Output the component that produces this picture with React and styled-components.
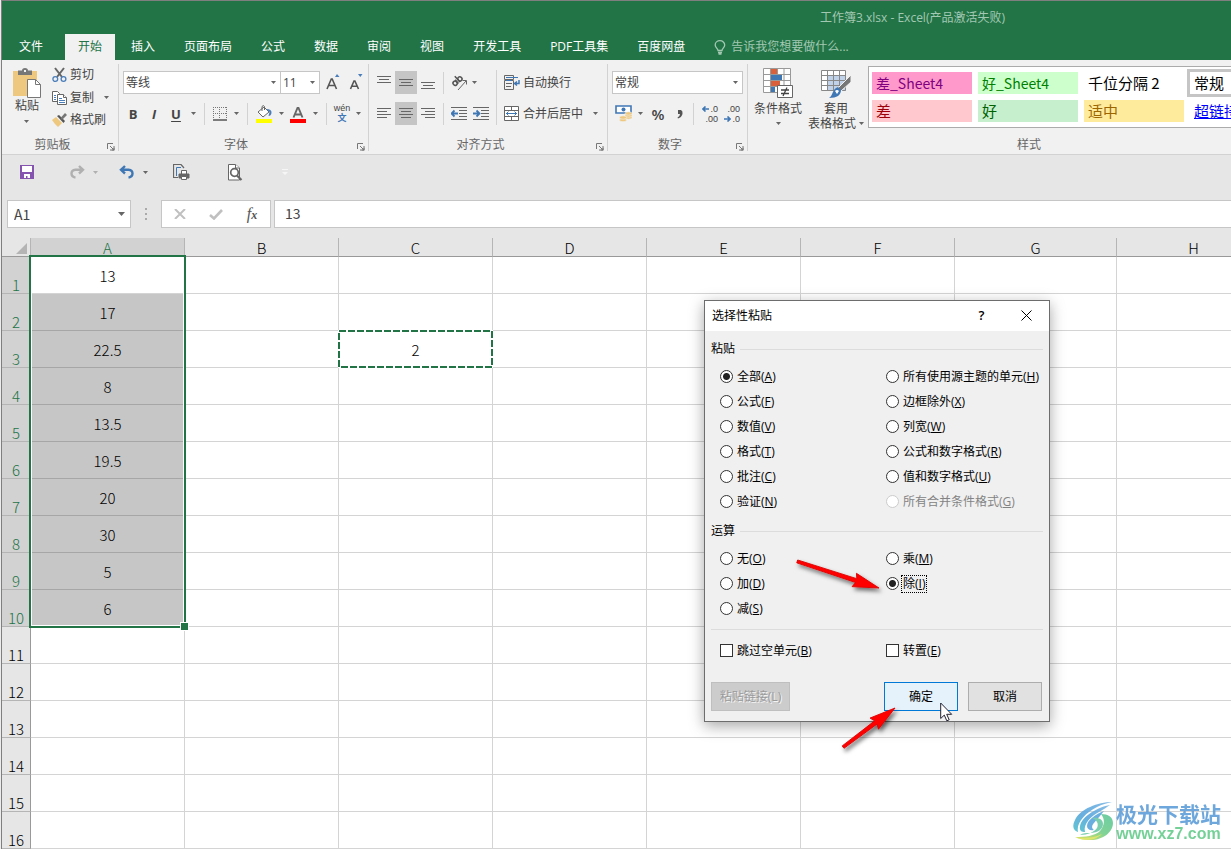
import React, { useState } from 'react';
import styled, { createGlobalStyle } from 'styled-components';

const GlobalStyle = createGlobalStyle`
  * {
    box-sizing: border-box;
  }
  body {
    margin: 0;
    background: #ececec;
    font-family: "Open Sans", "Noto Sans CJK SC", sans-serif;
    font-size: 12px;
    line-height: 16px;
    color: #444;
    overflow: hidden;
  }
  button, input, select {
    font: inherit;
    color: inherit;
    margin: 0;
  }
`;

const sheetFont = '"Noto Sans CJK SC", "Open Sans", sans-serif';

const Window = styled.div`
  position: relative;
  min-height: 100vh;
  margin-left: 1px;
  border-left: 1px solid #7f7f7f;
  border-top: 1px solid #7f7f7f;
  background: #e6e6e6;
  overflow: hidden;
`;

/* ---------- title + tabs ---------- */

const TitleBar = styled.header`
  height: 33px;
  padding-left: 592px;
  background: #227447;
  color: #a3c8b2;
  text-align: center;
  line-height: 33px;
  white-space: nowrap;
`;

const Tabs = styled.nav`
  display: flex;
  gap: 3px;
  height: 26px;
  background: #227447;
`;

const Tab = styled.button`
  padding: ${(props) => (props.$file ? '0 19px 0 17px' : '0 13px')};
  border: none;
  background: ${(props) => (props.$active ? '#f1f1f1' : 'transparent')};
  color: ${(props) => (props.$active ? '#227447' : '#fff')};
  line-height: 24px;
  white-space: nowrap;
`;

const TellMe = styled.button`
  display: flex;
  align-items: center;
  gap: 5px;
  padding: 0 13px;
  border: none;
  background: transparent;
  color: #a3c8b2;
  white-space: nowrap;
`;

/* ---------- ribbon ---------- */

const Ribbon = styled.div`
  display: flex;
  height: 95px;
  padding: 4px 0 3px;
  background: #f1f1f1;
  border-bottom: 1px solid #d2d2d2;
`;

const Group = styled.section`
  display: flex;
  flex-direction: column;
  flex: none;
  width: ${(props) => props.$width}px;
  border-right: 1px solid #d2d2d2;
`;

const GroupBody = styled.div`
  display: flex;
  flex: none;
  height: 73px;
  padding-left: ${(props) => props.$left || 4}px;
`;

const GroupFoot = styled.div`
  display: flex;
  align-items: flex-start;
  height: 14px;
  padding-right: 3px;
`;

const GroupName = styled.div`
  flex: 1;
  color: #666;
  text-align: center;
`;

const Launcher = styled.button`
  display: flex;
  justify-content: flex-end;
  width: 12px;
  height: 14px;
  padding: 6px 0 0;
  border: none;
  background: transparent;
`;

const Rows = styled.div`
  display: flex;
  flex-direction: column;
  gap: 8px;
  padding-top: 7px;
`;

const Row = styled.div`
  display: flex;
  align-items: center;
  height: 23px;
`;

const Tool = styled.button`
  display: flex;
  align-items: center;
  justify-content: center;
  flex: none;
  width: ${(props) => props.$width || 22}px;
  height: 23px;
  padding: 0;
  border: none;
  background: ${(props) => (props.$on ? '#c5c5c5' : 'transparent')};
`;

const Letter = styled.span`
  font-family: "Open Sans", sans-serif;
  font-size: 13px;
  font-weight: 700;
  font-style: ${(props) => (props.$italic ? 'italic' : 'normal')};
  text-decoration: ${(props) => (props.$under ? 'underline' : 'none')};
  text-underline-offset: 2px;
`;

const TextTool = styled.button`
  display: flex;
  align-items: center;
  gap: 3px;
  height: ${(props) => (props.$compact ? 22 : 23)}px;
  padding: 0 0 0 3px;
  border: none;
  background: transparent;
  white-space: nowrap;
`;

const Divider = styled.div`
  flex: none;
  width: 1px;
  height: ${(props) => props.$height || 22}px;
  margin: ${(props) => props.$margin || '0 5px'};
  background: #d2d2d2;
`;

const Combo = styled.div`
  display: flex;
  align-items: center;
  flex: none;
  width: ${(props) => props.$width}px;
  height: 23px;
  margin-left: ${(props) => (props.$joined ? -1 : 0)}px;
  padding-right: 4px;
  border: 1px solid #c6c6c6;
  background: #fff;
`;

const Select = styled.select`
  appearance: none;
  flex: 1;
  min-width: 0;
  height: 21px;
  padding: 0 2px;
  border: none;
  background: transparent;
  outline: none;
`;

const PasteButton = styled.button`
  display: flex;
  flex-direction: column;
  align-items: center;
  width: 44px;
  padding: 4px 0 0;
  border: none;
  background: transparent;
`;

const ClipList = styled.div`
  display: flex;
  flex-direction: column;
`;

const BigTool = styled.button`
  display: flex;
  flex-direction: column;
  align-items: center;
  flex: none;
  width: ${(props) => props.$width}px;
  padding: 4px 0 0;
  border: none;
  background: transparent;
  white-space: nowrap;
`;

const BigLine = styled.span`
  display: flex;
  align-items: center;
  gap: 3px;
  height: 15px;
  line-height: 15px;
`;

const IconGap = styled.span`
  display: flex;
  padding-bottom: 2px;
`;

const Gallery = styled.div`
  display: grid;
  grid-template-columns: repeat(4, 100px);
  grid-auto-rows: 22px;
  gap: 6px;
  flex: none;
  height: 62px;
  margin-top: 2px;
  padding: 5px 3px;
  border: 1px solid #ababab;
  background: #fff;
`;

const StyleCell = styled.button`
  padding: 0 4px;
  border: none;
  background: ${(props) => props.$bg || '#fff'};
  color: ${(props) => props.$color || '#000'};
  font-family: ${sheetFont};
  font-size: ${(props) => (props.$small ? 14 : 15)}px;
  line-height: 20px;
  text-align: left;
  white-space: nowrap;
  text-decoration: ${(props) => (props.$link ? 'underline' : 'none')};
  outline: ${(props) => (props.$current ? '3px solid #c5c5c5' : 'none')};
`;

/* ---------- quick access + formula bar ---------- */

const QuickBar = styled.div`
  display: flex;
  align-items: center;
  height: 34px;
  padding-left: 14px;
`;

const QuickGap = styled.span`
  flex: none;
  width: ${(props) => props.$width}px;
`;

const FormulaBar = styled.div`
  display: flex;
  height: 28px;
  margin: 11px 0 10px;
  padding-left: 5px;
`;

const NameBox = styled.div`
  display: flex;
  align-items: center;
  width: 124px;
  padding-right: 5px;
  border: 1px solid #c6c6c6;
  background: #fff;
`;

const BarInput = styled.input`
  flex: 1;
  min-width: 0;
  height: 24px;
  padding: 0 6px;
  border: none;
  background: transparent;
  outline: none;
  font-family: ${sheetFont};
  font-size: 14px;
`;

const Dots = styled.div`
  display: flex;
  align-items: center;
  justify-content: center;
  width: 30px;
`;

const FxBox = styled.div`
  display: flex;
  align-items: center;
  width: 110px;
  margin-right: 3px;
  border: 1px solid #c6c6c6;
  background: #fff;
`;

const Fx = styled.i`
  font-family: "Liberation Serif", serif;
  font-size: 16px;
  color: #555;

  small {
    font-size: 12px;
    font-weight: 700;
  }
`;

const FormulaBox = styled.div`
  display: flex;
  flex: 1;
  padding-left: 4px;
  border: 1px solid #c6c6c6;
  border-right: none;
  background: #fff;
`;

/* ---------- sheet ---------- */

const SheetArea = styled.main`
  position: relative;
  background: #fff;
`;

const Sheet = styled.table`
  table-layout: fixed;
  width: 1269px;
  border-collapse: separate;
  border-spacing: 0;
  font-family: ${sheetFont};
  font-size: 15px;
  font-weight: 300;
  line-height: 18px;
  color: #000;
`;

const Corner = styled.th`
  height: 19px;
  padding: 0 3px 2px 0;
  background: #e6e6e6;
  border-right: 1px solid #b5b5b5;
  border-bottom: 1px solid #999;
  text-align: right;
  vertical-align: bottom;
  line-height: 0;
`;

const ColHead = styled.th`
  height: 19px;
  padding: 2px 0 0;
  font-weight: 300;
  font-size: 15px;
  line-height: 16px;
  color: ${(props) => (props.$on ? '#227447' : '#000')};
  background: ${(props) => (props.$on ? '#d2d2d2' : '#e6e6e6')};
  border-right: 1px solid #b5b5b5;
  border-bottom: 1px solid #999;
`;

const RowHead = styled.th`
  height: 37px;
  padding: 0;
  font-weight: 300;
  vertical-align: bottom;
  line-height: 17px;
  color: ${(props) => (props.$on ? '#227447' : '#000')};
  background: ${(props) => (props.$on ? '#d2d2d2' : '#e6e6e6')};
  border-right: 1px solid #999;
  border-bottom: 1px solid #b5b5b5;
`;

const Cell = styled.td`
  height: 37px;
  padding: 2px 0 0;
  text-align: center;
  background: ${(props) => (props.$picked ? '#c6c6c6' : '#fff')};
  border-right: 1px solid #d4d4d4;
  border-bottom: 1px solid ${(props) => (props.$picked ? '#a6a6a6' : '#d4d4d4')};
`;

const Selection = styled.div`
  position: absolute;
  top: 17px;
  left: 27px;
  width: 157px;
  height: 373px;
  border: 2px solid #227447;
  box-shadow: inset 0 0 0 1px #fff;

  &::after {
    content: "";
    position: absolute;
    right: -5px;
    bottom: -5px;
    width: 7px;
    height: 7px;
    background: #227447;
    border: 1px solid #fff;
  }
`;

const Marching = styled.svg`
  position: absolute;
  top: 92px;
  left: 336px;
`;

/* ---------- dialog ---------- */

const Dialog = styled.div`
  position: absolute;
  top: 299px;
  left: 702px;
  width: 346px;
  border: 1px solid #6d6d6d;
  background: #f0f0f0;
  box-shadow: 0 4px 14px rgba(0, 0, 0, 0.35);
  color: #000;
`;

const DialogTitle = styled.div`
  display: flex;
  height: 30px;
  padding-left: 7px;
  background: #fff;
  line-height: 30px;
`;

const DialogName = styled.div`
  flex: 1;
`;

const TitleButton = styled.button`
  display: flex;
  align-items: center;
  justify-content: center;
  width: 45px;
  height: 28px;
  padding: 0;
  border: none;
  background: transparent;
  font-size: 13px;
  font-weight: 600;
`;

const DialogBody = styled.div`
  padding: 9px 6px 10px;
`;

const Fieldset = styled.div`
  padding-bottom: 8px;
`;

const Legend = styled.div`
  display: flex;
  align-items: center;
  gap: 5px;
  height: 18px;
  line-height: 18px;
  margin-bottom: 6px;

  &::after {
    content: "";
    flex: 1;
    height: 1px;
    background: #dcdcdc;
  }
`;

const Options = styled.div`
  display: grid;
  grid-template-columns: 166px 1fr;
  grid-template-rows: repeat(${(props) => props.$rows}, 25px);
  grid-auto-flow: column;
  padding-left: 9px;
`;

const Option = styled.label`
  display: flex;
  align-items: center;
  gap: 2px;
  white-space: nowrap;
  color: ${(props) => (props.$off ? '#838383' : '#000')};
`;

const OptionText = styled.span`
  padding: 0 1px;
  border: 1px ${(props) => (props.$focus ? 'dotted #000' : 'solid transparent')};
`;

const Radio = styled.input`
  appearance: none;
  width: 13px;
  height: 13px;
  border: 1px solid #333;
  border-radius: 50%;
  background: #fff;

  &:checked {
    background: radial-gradient(circle, #222 0 3px, #fff 4px);
  }
  &:disabled {
    border-color: #ccc;
  }
`;

const Check = styled.input`
  appearance: none;
  width: 13px;
  height: 13px;
  border: 1px solid #333;
  background: #fff;
`;

const Rule = styled.div`
  height: 1px;
  margin-bottom: 8px;
  background: #dcdcdc;
`;

const Actions = styled.div`
  display: flex;
  gap: 10px;
  padding: 19px 1px 0 0;
`;

const Action = styled.button`
  width: ${(props) => props.$width || 74}px;
  height: 29px;
  margin-right: ${(props) => (props.$first ? 'auto' : '0')};
  padding: 0;
  border: 1px solid ${(props) => (props.$main ? '#0078d7' : '#adadad')};
  background: ${(props) => (props.$main ? '#e5f1fb' : '#e1e1e1')};
  white-space: nowrap;

  &:disabled {
    border-color: #bfbfbf;
    background: #ccc;
    color: #9a9a9a;
    text-shadow: 1px 1px 0 #f4f4f4;
  }
`;

const Overlay = styled.svg`
  position: absolute;
  top: ${(props) => props.$top}px;
  left: ${(props) => props.$left}px;
  pointer-events: none;
  overflow: visible;
`;

const Watermark = styled.div`
  position: absolute;
  right: 10px;
  bottom: 6px;
  display: flex;
  align-items: center;
  gap: 2px;
  opacity: 0.9;
`;

const MarkName = styled.div`
  font-family: "Noto Sans CJK SC", sans-serif;
  font-size: 21px;
  font-weight: 700;
  line-height: 24px;
  color: #5e9ed8;
`;

const MarkUrl = styled.div`
  font-family: "Liberation Sans", sans-serif;
  font-size: 16px;
  font-weight: 700;
  line-height: 18px;
  text-align: center;
  color: #66cc8c;
`;

/* ---------- icons ---------- */

const Caret = ({ color = '#666', size = 5 }) => (
  <svg width={size} height={size > 5 ? 4 : 3} viewBox="0 0 5 3" preserveAspectRatio="none"><path d="M0 0h5L2.500 3z" fill={color} /></svg>
);

const DropDown = ({ width = 12, label }) => (
  <Tool $width={width} aria-label={label}><Caret /></Tool>
);

const LauncherIcon = () => (
  <svg width="8" height="8" viewBox="0 0 8 8" fill="none" stroke="#777">
    <path d="M.5 6V.5H6M3 3l3 3M7 3v4H3" />
    <path d="M7.500 4.500v3h-3z" fill="#777" stroke="none" />
  </svg>
);

const Bulb = () => (
  <svg width="12" height="15" viewBox="0 0 12 15" fill="none" stroke="#a3c8b2" strokeWidth="1.300">
    <path d="M4 10.500C4 8.500 1.200 7.500 1.200 5a4.700 4.300 0 0 1 9.500 0C10.700 7.500 8 8.500 8 10.500zM4 12.500h4M4.500 14h3" />
  </svg>
);

const PasteIcon = () => (
  <svg width="28" height="30" viewBox="0 0 28 30">
    <path d="M0 3h24v25H0z" fill="#edc87e" />
    <path d="M5 2.500h4Q9 0 12 0t3 2.500h4V7H5z" fill="#777" />
    <path d="M11 2h2v2h-2z" fill="#f1f1f1" />
    <path d="M14.500 11.500h8l5 5v13h-13z" fill="#fff" stroke="#777" />
    <path d="M22.500 11.500v5h5" fill="none" stroke="#777" />
  </svg>
);

const CutIcon = () => (
  <svg width="15" height="16" viewBox="0 0 15 16" fill="none">
    <path d="M3 1l7 9M12 1L5 10" stroke="#666" strokeWidth="2" />
    <circle cx="3.300" cy="12" r="2.400" stroke="#4a7ebb" strokeWidth="1.300" />
    <circle cx="11.500" cy="12" r="2.400" stroke="#4a7ebb" strokeWidth="1.300" />
  </svg>
);

const CopyIcon = () => (
  <svg width="15" height="14" viewBox="0 0 15 14" fill="#fff" stroke="#666">
    <path d="M.5.500h5l2 2v8h-7z" />
    <path d="M5.500 3.500h6l3 3v7h-9z" />
    <path d="M11.500 3.500v3h3" />
    <path d="M2 4.500h2M2 6.500h2M2 8.500h2M7 7.500h3M7 9.500h6M7 11.500h6" stroke="#4a7ebb" />
  </svg>
);

const BrushIcon = () => (
  <svg width="15" height="14" viewBox="0 0 15 14">
    <path d="M0 7l4-3 6 6-4 4C4 12 2 10 0 7z" fill="#edc87e" />
    <path d="M5 3l2-1 6 6-1.500 2z" fill="#555" />
    <path d="M8.500 5l4.500-5 2 2-5 5z" fill="#777" />
  </svg>
);

const FontSize = ({ big }) => (
  <svg width="14" height="17" viewBox="0 0 14 17">
    <path d={big ? 'M1 15L5.300 5h.9l4.300 10M2.500 11.500h6.500' : 'M1.500 15L5 7h.9l3.600 8M3 12.300h5.200'} fill="none" stroke="#555" strokeWidth="1.600" />
    <path d={big ? 'M9 3l2-3 2.500 3z' : 'M9 0h4.500l-2.200 3z'} fill="#4a7ebb" />
  </svg>
);

const BorderIcon = () => (
  <svg width="14" height="14" viewBox="0 0 14 14" stroke="#777">
    <path d="M0 .5h14M0 6.500h14M.5 0v12M6.500 0v12M13.500 0v12" strokeDasharray="1 1" />
    <path d="M0 13h14" stroke="#555" strokeWidth="1.500" />
  </svg>
);

const BucketIcon = () => (
  <svg width="18" height="18" viewBox="0 0 18 18">
    <path d="M3 7l6-5 5 5-6 5z" fill="#fff" stroke="#666" />
    <path d="M7 6V1.500q1.500-2 2.500 0V5" fill="none" stroke="#666" />
    <path d="M11 4q6 0 5.500 4-.5 3-3 3l1-4z" fill="#4a7ebb" />
    <path d="M1 14h16v4H1z" fill="#ff0" />
  </svg>
);

const FontColorIcon = () => (
  <svg width="16" height="18" viewBox="0 0 16 18">
    <path d="M3.500 12.500L7.500 3h1l4 9.500M5 9.500h6" fill="none" stroke="#666" strokeWidth="1.900" />
    <path d="M0 14h16v4H0z" fill="#f00" />
  </svg>
);

const Phonetic = styled.span`
  display: flex;
  flex-direction: column;
  font-family: "Liberation Sans", "Noto Sans CJK SC", sans-serif;
  font-size: 9px;
  line-height: 9px;
  text-align: center;

  b {
    line-height: 11px;
    color: #3f77b5;
  }
`;

const Lines = ({ rows }) => (
  <svg width="14" height="13" viewBox="0 0 14 13" stroke="#666">
    {rows.map(([x, y, w]) => <path key={y} d={`M${x} ${y + 0.5}h${w}`} />)}
  </svg>
);

const OrientIcon = () => (
  <svg width="17" height="17" viewBox="0 0 17 17">
    <g fill="none" stroke="#555" strokeWidth="1.500" transform="rotate(-42 7 8)">
      <ellipse cx="4" cy="7" rx="2" ry="2.200" />
      <path d="M6.300 4.500v5M8.500 1.500v8" />
      <ellipse cx="10.500" cy="7" rx="2" ry="2.200" />
    </g>
    <path d="M7 16l8-9M11.500 6.500h4V10.500" fill="none" stroke="#666" />
  </svg>
);

const IndentIcon = ({ out }) => (
  <svg width="16" height="13" viewBox="0 0 16 13">
    <path d="M0 .5h16M8 3.500h8M8 6.500h8M8 9.500h8M0 12.500h16" stroke="#666" />
    <path d={out ? 'M7 6.500H1M3.500 3.500l-3 3 3 3' : 'M0 6.500h6M3.500 3.500l3 3-3 3'} fill="none" stroke="#3f77b5" strokeWidth="1.800" />
  </svg>
);

const WrapIcon = () => (
  <svg width="16" height="15" viewBox="0 0 16 15" fill="none" stroke="#666">
    <path d="M.5.500h9v4h-9zM.5 5.500h9v9h-9zM2 8.500h6M2 11.500h5" />
    <path d="M2 2.500h12M2 5.500h6" stroke="#3f77b5" />
    <path d="M15 5v3.500h-4M13 6.500l-2.500 2 2.500 2" stroke="#3f77b5" strokeWidth="1.500" />
  </svg>
);

const MergeIcon = () => (
  <svg width="16" height="15" viewBox="0 0 16 15" fill="#fff" stroke="#666">
    <path d="M.5.500h14v14H.5zM.5 4.500h14M.5 10.500h14M7.500.500v4M7.500 10.500v4" />
    <path d="M2 7.500h11M4.500 5.500l-2 2 2 2M10.500 5.500l2 2-2 2" fill="none" stroke="#3f77b5" />
  </svg>
);

const MoneyIcon = () => (
  <svg width="18" height="17" viewBox="0 0 18 17">
    <path d="M1 1h15v7H1z" fill="#fff" stroke="#3f77b5" strokeWidth="1.600" />
    <circle cx="8.500" cy="4.500" r="2" fill="#3f77b5" />
    <g fill="#edc87e" stroke="#f1f1f1" strokeWidth=".6">
      <ellipse cx="13.500" cy="12.500" rx="3.500" ry="1.700" />
      <ellipse cx="13.500" cy="10.500" rx="3.500" ry="1.700" />
      <ellipse cx="13.500" cy="8.500" rx="3.500" ry="1.700" />
      <ellipse cx="8" cy="15" rx="3.500" ry="1.700" />
      <ellipse cx="8" cy="12.500" rx="3.500" ry="1.700" />
    </g>
  </svg>
);

const Percent = styled.span`
  font-size: 15px;
  font-weight: 600;
`;

const Decimal = styled.span`
  display: flex;
  flex-direction: column;
  align-items: flex-end;
  width: 16px;
  font-family: "Liberation Sans", sans-serif;
  font-size: 9px;
  line-height: 10px;

  span {
    display: flex;
    align-items: center;
    gap: 1px;
  }
`;

const SmallArrow = ({ right }) => (
  <svg width="7" height="6" viewBox="0 0 7 6" fill="none" stroke="#3f77b5" strokeWidth="1.600">
    <path d={right ? 'M0 3h6M3.500.5L6 3 3.500 5.500' : 'M7 3H1M3.500.5L1 3l2.500 2.500'} />
  </svg>
);

const CondIcon = () => (
  <svg width="31" height="31" viewBox="0 0 31 31">
    <path d="M1 1h27v24H1z" fill="#fff" />
    <path d="M.5.500h27v24H.5zM.5 6.500h27M.5 12.500h27M.5 18.500h27M7.500 1v24M14.500 1v24M21 1v24" fill="none" stroke="#999" />
    <path d="M8 1h6v5H8zM8 13h9v5H8z" fill="#d9603b" />
    <path d="M8 7h11v5H8zM8 19h4v5H8z" fill="#3f77b5" />
    <path d="M14.500 17.500h15v12h-15z" fill="#fff" stroke="#666" />
    <path d="M18 22h8M18 25.500h8M24 19.500L20 28" fill="none" stroke="#444" strokeWidth="1.300" />
  </svg>
);

const TableIcon = () => (
  <svg width="31" height="31" viewBox="0 0 31 31">
    <path d="M1 3h24v20H1z" fill="#fff" />
    <path d="M7 8h18v15H7z" fill="#bfd2ea" />
    <path d="M.5 2.500h24v20H.5zM.5 7.500h24M.5 12.500h24M.5 17.500h24M6.500 3v20M12.500 3v20M18.500 3v20" fill="none" stroke="#888" />
    <path d="M30 7v7l-10 9-3-3z" fill="#777" stroke="#f1f1f1" />
    <path d="M17 19l3 3c0 5-4 8-12 8 4-2 3-9 9-11z" fill="#3f77b5" />
    <path d="M14 23q2-2 4 0l-2 3z" fill="#fff" />
  </svg>
);

const SaveIcon = () => (
  <svg width="14" height="14" viewBox="0 0 14 14">
    <path d="M0 0h14v14H0z" fill="#8454ae" />
    <path d="M2 1h10v6H2zM4 9h6v4H7.500v-2H6v2H4z" fill="#fff" />
  </svg>
);

const TurnIcon = ({ back }) => (
  <svg width="16" height="14" viewBox="0 0 16 14" fill="none" stroke={back ? '#3f77b5' : '#b0b0b0'} strokeWidth="2.400">
    <path d={back ? 'M6 1L2 4.800 6 8.500M2 4.800h7.500q4 .4 4 3.800 0 3.200-4 4' : 'M10 1l4 3.800-4 3.700M14 4.800H6.500q-4 .4-4 3.800 0 3.200 4 4'} />
  </svg>
);

const PrintIcon = () => (
  <svg width="17" height="17" viewBox="0 0 17 17" fill="none" stroke="#666">
    <path d="M5 13.500H.5V.500H8L11 4" strokeWidth="1.200" />
    <path d="M3.500 12V3.500H8" stroke="#3f77b5" />
    <path d="M6 10h10v4H6z" fill="#666" />
    <path d="M8.500 6.500h5V10h-5zM8.500 12.500h5v3h-5z" fill="#fff" />
  </svg>
);

const PreviewIcon = () => (
  <svg width="16" height="17" viewBox="0 0 16 17" fill="#fff" stroke="#666">
    <path d="M1.500.5h7L12.500 4v12h-11z" />
    <path d="M8.500.5V4h4" />
    <circle cx="7.500" cy="8.500" r="3.800" strokeWidth="1.700" />
    <path d="M10 11.500l4.500 4.500" strokeWidth="2.200" />
  </svg>
);

const Brand = () => (
  <svg width="42" height="42" viewBox="0 0 42 42">
    <defs>
      <linearGradient id="leaf" x1="0" y1="1" x2="1" y2="0">
        <stop offset="0" stopColor="#dde04e" />
        <stop offset=".5" stopColor="#74cf8a" />
        <stop offset="1" stopColor="#5cc79c" />
      </linearGradient>
      <linearGradient id="wave" x1="0" y1="1" x2="1" y2="0">
        <stop offset="0" stopColor="#4fc0cc" />
        <stop offset=".4" stopColor="#58a6dc" />
        <stop offset="1" stopColor="#7cb6e4" />
      </linearGradient>
    </defs>
    <path d="M40 1C26 1 8 8 3 19c-4 8 0 11 3 12C4 22 13 12 25 6c6-3 11-4 15-5z" fill="url(#wave)" />
    <path d="M38 4C26 6 10 15 8 25c-1 5 2 6 5 6-2-8 6-16 14-20 5-3 8-5 11-7z" fill="url(#wave)" />
    <path d="M32 10c-8 3-17 9-17 15 0 3 3 5 7 4-3-2-2-5 0-7 4-5 7-8 10-12z" fill="#5aa6dc" />
    <path d="M29 13c7 0 12 3 12 9 0 9-10 17-22 17-7 0-12-1-16-3 10 0 20-1 25-6 5-6 5-12 1-17z" fill="url(#leaf)" />
    <path d="M20 17c6-1 11 1 11 6s-5 9-13 9c-4 0-7 0-10 2 8 0 14-3 17-7 2-4 0-8-5-10z" fill="#6cc9a6" />
    <path d="M5 37c8 0 18 0 25-4-5 5-14 8-25 4z" fill="#dce35a" />
  </svg>
);

const Arrow = ({ top, left, angle, id, length }) => (
  <Overlay $top={top} $left={left} width="2" height="2">
    <defs>
      <filter id={id} x="-20%" y="-100%" width="150%" height="400%">
        <feDropShadow dx="2" dy="3" stdDeviation="2" floodOpacity=".55" />
      </filter>
    </defs>
    <g filter={`url(#${id})`}>
      <path
        d={`M${-length} -1.500L-24 -2l-2 -5L0 0l-26 7 2 -5L${-length} 1.500z`}
        transform={`rotate(${angle})`}
        fill="#f00"
        stroke="#d00"
        strokeWidth=".8"
        strokeLinejoin="round"
      />
    </g>
  </Overlay>
);

/* ---------- data ---------- */

const tabs = ['插入', '页面布局', '公式', '数据', '审阅', '视图', '开发工具', 'PDF工具集', '百度网盘'];

const cellStyles = [
  { name: '差_Sheet4', bg: '#ff99cc', color: '#800080', small: true },
  { name: '好_Sheet4', bg: '#ccffcc', color: '#008000', small: true },
  { name: '千位分隔 2' },
  { name: '常规', current: true },
  { name: '差', bg: '#ffc7ce', color: '#9c0006' },
  { name: '好', bg: '#c6efce', color: '#006100' },
  { name: '适中', bg: '#ffeb9c', color: '#9c6500' },
  { name: '超链接', color: '#0000ff', link: true },
];

const columns = [
  { name: 'A', width: 154 },
  { name: 'B', width: 154 },
  { name: 'C', width: 154 },
  { name: 'D', width: 154 },
  { name: 'E', width: 154 },
  { name: 'F', width: 154 },
  { name: 'G', width: 162 },
  { name: 'H', width: 154 },
];

const values = ['13', '17', '22.5', '8', '13.5', '19.5', '20', '30', '5', '6'];

const pasteOptions = [
  ['全部', 'A'],
  ['公式', 'F'],
  ['数值', 'V'],
  ['格式', 'T'],
  ['批注', 'C'],
  ['验证', 'N'],
  ['所有使用源主题的单元', 'H'],
  ['边框除外', 'X'],
  ['列宽', 'W'],
  ['公式和数字格式', 'R'],
  ['值和数字格式', 'U'],
  ['所有合并条件格式', 'G', true],
];

const operations = [
  ['无', 'O'],
  ['加', 'D'],
  ['减', 'S'],
  ['乘', 'M'],
  ['除', 'I'],
];

const alignRows = {
  top: [[0, 0, 14], [2, 3, 10], [0, 6, 14]],
  middle: [[0, 3, 14], [2, 6, 10], [0, 9, 14]],
  bottom: [[0, 6, 14], [2, 9, 10], [0, 12, 14]],
  left: [[0, 1, 14], [0, 4, 10], [0, 7, 14], [0, 10, 10]],
  center: [[0, 1, 14], [2, 4, 10], [0, 7, 14], [2, 10, 10]],
  right: [[0, 1, 14], [4, 4, 10], [0, 7, 14], [4, 10, 10]],
};

const RibbonGroup = ({ name, width, left, launcher = true, children }) => (
  <Group $width={width}>
    <GroupBody $left={left}>{children}</GroupBody>
    <GroupFoot>
      <GroupName>{name}</GroupName>
      {launcher && <Launcher aria-label={`${name}设置`}><LauncherIcon /></Launcher>}
    </GroupFoot>
  </Group>
);

const Picker = ({ label, value, width, joined }) => (
  <Combo $width={width} $joined={joined}>
    <Select aria-label={label} defaultValue={value}>
      <option>{value}</option>
    </Select>
    <Caret />
  </Combo>
);

const RadioOption = ({ group, text, hot, off, focus, value, onPick }) => (
  <Option $off={off}>
    <Radio type="radio" name={group} checked={value === hot} disabled={off} onChange={() => onPick(hot)} />
    <OptionText $focus={focus}>{text}(<u>{hot}</u>)</OptionText>
  </Option>
);

const PasteSpecial = () => {
  const [paste, setPaste] = useState('A');
  const [operation, setOperation] = useState('I');

  return (
    <Dialog role="dialog" aria-label="选择性粘贴">
      <DialogTitle>
        <DialogName>选择性粘贴</DialogName>
        <TitleButton>?</TitleButton>
        <TitleButton aria-label="关闭">
          <svg width="11" height="11" viewBox="0 0 11 11" stroke="#000"><path d="M.5.500l10 10M10.500.500l-10 10" /></svg>
        </TitleButton>
      </DialogTitle>
      <DialogBody>
        <Fieldset>
          <Legend>粘贴</Legend>
          <Options $rows={6}>
            {pasteOptions.map(([text, hot, off]) => (
              <RadioOption key={hot} group="paste" text={text} hot={hot} off={off} value={paste} onPick={setPaste} />
            ))}
          </Options>
        </Fieldset>
        <Fieldset>
          <Legend>运算</Legend>
          <Options $rows={3}>
            {operations.map(([text, hot]) => (
              <RadioOption key={hot} group="operation" text={text} hot={hot} focus={operation === hot} value={operation} onPick={setOperation} />
            ))}
          </Options>
        </Fieldset>
        <Rule />
        <Options $rows={1}>
          <Option><Check type="checkbox" /><OptionText>跳过空单元(<u>B</u>)</OptionText></Option>
          <Option><Check type="checkbox" /><OptionText>转置(<u>E</u>)</OptionText></Option>
        </Options>
        <Actions>
          <Action $first $width={79} disabled>粘贴链接(L)</Action>
          <Action $main>确定</Action>
          <Action>取消</Action>
        </Actions>
      </DialogBody>
    </Dialog>
  );
};

const App = () => {
  const [formula, setFormula] = useState('13');
  const [name, setName] = useState('A1');

  return (
    <>
      <GlobalStyle />
      <Window>
        <TitleBar>工作簿3.xlsx - Excel(产品激活失败)</TitleBar>
        <Tabs>
          <Tab $file>文件</Tab>
          <Tab $active>开始</Tab>
          {tabs.map((tab) => <Tab key={tab}>{tab}</Tab>)}
          <TellMe><Bulb />告诉我您想要做什么...</TellMe>
        </Tabs>

        <Ribbon>
          <RibbonGroup name="剪贴板" width={117} left={3}>
            <PasteButton>
              <PasteIcon />
              粘贴
              <BigLine><Caret /></BigLine>
            </PasteButton>
            <ClipList>
              <TextTool $compact><CutIcon />剪切</TextTool>
              <Row>
                <TextTool $compact><CopyIcon />复制</TextTool>
                <DropDown width={24} label="复制选项" />
              </Row>
              <TextTool $compact><BrushIcon />格式刷</TextTool>
            </ClipList>
          </RibbonGroup>

          <RibbonGroup name="字体" width={250} left={4}>
            <Rows>
              <Row>
                <Picker label="字体" value="等线" width={158} />
                <Picker label="字号" value="11" width={40} joined />
                <Tool $width={26} aria-label="增大字号"><FontSize big /></Tool>
                <Tool $width={20} aria-label="减小字号"><FontSize /></Tool>
              </Row>
              <Row>
                <Tool $width={20}><Letter>B</Letter></Tool>
                <Tool><Letter $italic>I</Letter></Tool>
                <Tool><Letter $under>U</Letter></Tool>
                <DropDown label="下划线样式" />
                <Divider />
                <Tool $width={20} aria-label="边框"><BorderIcon /></Tool>
                <DropDown label="边框样式" />
                <Divider />
                <Tool aria-label="填充颜色"><BucketIcon /></Tool>
                <DropDown label="更多填充颜色" />
                <Tool aria-label="字体颜色"><FontColorIcon /></Tool>
                <DropDown label="更多字体颜色" />
                <Divider />
                <Tool $width={20}><Phonetic>wén<b>文</b></Phonetic></Tool>
                <DropDown label="拼音设置" />
              </Row>
            </Rows>
          </RibbonGroup>

          <RibbonGroup name="对齐方式" width={239} left={4}>
            <Rows>
              <Row>
                <Tool aria-label="顶端对齐"><Lines rows={alignRows.top} /></Tool>
                <Tool $on aria-label="垂直居中"><Lines rows={alignRows.middle} /></Tool>
                <Tool aria-label="底端对齐"><Lines rows={alignRows.bottom} /></Tool>
                <Divider $margin="0 4px" />
                <Tool aria-label="方向"><OrientIcon /></Tool>
                <DropDown width={8} label="方向选项" />
              </Row>
              <Row>
                <Tool aria-label="左对齐"><Lines rows={alignRows.left} /></Tool>
                <Tool $on aria-label="居中"><Lines rows={alignRows.center} /></Tool>
                <Tool aria-label="右对齐"><Lines rows={alignRows.right} /></Tool>
                <Divider $margin="0 4px" />
                <Tool aria-label="减少缩进"><IndentIcon out /></Tool>
                <Tool aria-label="增加缩进"><IndentIcon /></Tool>
              </Row>
            </Rows>
            <Divider $height={55} $margin="6px 4px 0" />
            <Rows>
              <Row><TextTool><WrapIcon />自动换行</TextTool></Row>
              <Row>
                <TextTool><MergeIcon />合并后居中</TextTool>
                <DropDown width={24} label="合并选项" />
              </Row>
            </Rows>
          </RibbonGroup>

          <RibbonGroup name="数字" width={140} left={4}>
            <Rows>
              <Row><Picker label="数字格式" value="常规" width={131} /></Row>
              <Row>
                <Tool $width={24} aria-label="会计数字格式"><MoneyIcon /></Tool>
                <DropDown width={8} label="货币选项" />
                <Tool $width={28}><Percent>%</Percent></Tool>
                <Tool $width={16} aria-label="千位分隔样式">
                  <svg width="6" height="10" viewBox="0 0 6 10"><path d="M1 1h3q2 1 1.500 4Q4.500 8.500 1 9.500L.5 8.500Q3 7 3 5H1z" fill="#555" /></svg>
                </Tool>
                <Divider />
                <Tool aria-label="增加小数位数"><Decimal><span><SmallArrow />.0</span>.00</Decimal></Tool>
                <Tool aria-label="减少小数位数"><Decimal>.00<span><SmallArrow right />.0</span></Decimal></Tool>
              </Row>
            </Rows>
          </RibbonGroup>

          <RibbonGroup name="样式" width={566} left={4} launcher={false}>
            <BigTool $width={52}>
              <IconGap><CondIcon /></IconGap>
              <BigLine>条件格式</BigLine>
              <BigLine><Caret /></BigLine>
            </BigTool>
            <BigTool $width={64}>
              <IconGap><TableIcon /></IconGap>
              <BigLine>套用</BigLine>
              <BigLine>表格格式<Caret /></BigLine>
            </BigTool>
            <Gallery>
              {cellStyles.map((s) => (
                <StyleCell key={s.name} $bg={s.bg} $color={s.color} $link={s.link} $current={s.current} $small={s.small}>{s.name}</StyleCell>
              ))}
            </Gallery>
          </RibbonGroup>
        </Ribbon>

        <QuickBar>
          <Tool aria-label="保存"><SaveIcon /></Tool>
          <QuickGap $width={28} />
          <Tool aria-label="恢复"><TurnIcon /></Tool>
          <Tool $width={14} aria-label="恢复列表"><Caret color="#b0b0b0" /></Tool>
          <QuickGap $width={14} />
          <Tool aria-label="撤销"><TurnIcon back /></Tool>
          <Tool $width={14} aria-label="撤销列表"><Caret /></Tool>
          <QuickGap $width={18} />
          <Tool aria-label="快速打印"><PrintIcon /></Tool>
          <QuickGap $width={32} />
          <Tool aria-label="打印预览"><PreviewIcon /></Tool>
          <QuickGap $width={28} />
          <Tool aria-label="自定义快速访问工具栏">
            <svg width="6" height="7" viewBox="0 0 6 7" fill="#f6f6f6"><path d="M0 0h6v1H0zM0 3h6L3 6z" /></svg>
          </Tool>
        </QuickBar>

        <FormulaBar>
          <NameBox>
            <BarInput aria-label="名称框" value={name} onChange={(e) => setName(e.target.value)} />
            <Caret size={7} />
          </NameBox>
          <Dots>
            <svg width="2" height="12" viewBox="0 0 2 12" fill="#aaa"><path d="M0 0h2v2H0zM0 5h2v2H0zM0 10h2v2H0z" /></svg>
          </Dots>
          <FxBox>
            <Tool $width={36} aria-label="取消输入">
              <svg width="12" height="10" viewBox="0 0 12 10" stroke="#c0c0c0" strokeWidth="2"><path d="M1 0l10 10M11 0L1 10" /></svg>
            </Tool>
            <Tool $width={36} aria-label="输入">
              <svg width="14" height="11" viewBox="0 0 14 11" fill="none" stroke="#c0c0c0" strokeWidth="2.600"><path d="M1 6l4 3.500L13 1" /></svg>
            </Tool>
            <Tool $width={36}><Fx>f<small>x</small></Fx></Tool>
          </FxBox>
          <FormulaBox>
            <BarInput aria-label="编辑栏" value={formula} onChange={(e) => setFormula(e.target.value)} />
          </FormulaBox>
        </FormulaBar>

        <SheetArea>
          <Sheet>
            <colgroup>
              <col width="29" />
              {columns.map((c) => <col key={c.name} width={c.width} />)}
            </colgroup>
            <thead>
              <tr>
                <Corner aria-label="全选"><svg width="11" height="11" viewBox="0 0 11 11"><path d="M11 0v11H0z" fill="#b4b4b4" /></svg></Corner>
                {columns.map((c) => <ColHead key={c.name} $on={c.name === 'A'}>{c.name}</ColHead>)}
              </tr>
            </thead>
            <tbody>
              {Array.from({ length: 16 }, (_, r) => (
                <tr key={r}>
                  <RowHead $on={r < 10}>{r + 1}</RowHead>
                  {columns.map((c) => (
                    <Cell key={c.name} $picked={c.name === 'A' && r > 0 && r < 10}>
                      {c.name === 'A' && values[r]}
                      {c.name === 'C' && r === 2 && '2'}
                    </Cell>
                  ))}
                </tr>
              ))}
            </tbody>
          </Sheet>
          <Selection />
          <Marching width="156" height="39" viewBox="0 0 156 39">
            <rect x="1" y="1" width="153" height="36" fill="none" stroke="#fff" strokeWidth="2" />
            <rect x="1" y="1" width="153" height="36" fill="none" stroke="#227447" strokeWidth="2" strokeDasharray="7 2" />
          </Marching>
        </SheetArea>

        <PasteSpecial />

        <Arrow id="shade-a" top={587} left={877} angle={18} length={86} />
        <Arrow id="shade-b" top={707} left={893} angle={-37} length={65} />
        <Overlay $top={701} $left={938} width="13" height="20" viewBox="0 0 13 20">
          <path d="M.7 1v15.500l3.600-3.400 2.500 5.700 2.400-1-2.500-5.500h5z" fill="#fff" stroke="#223" />
        </Overlay>

        <Watermark>
          <Brand />
          <div>
            <MarkName>极光下载站</MarkName>
            <MarkUrl>www.xz7.com</MarkUrl>
          </div>
        </Watermark>
      </Window>
    </>
  );
};

export default App;
